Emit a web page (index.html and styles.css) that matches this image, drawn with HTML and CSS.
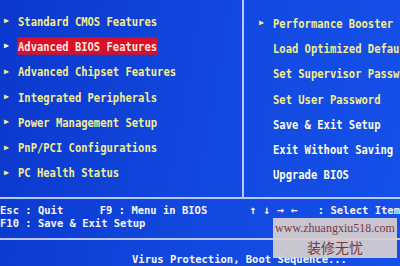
FILE: index.html
```html
<!DOCTYPE html>
<html lang="en">
<head>
  <meta charset="UTF-8">
  <title>CMOS Setup Utility</title>
  <link rel="stylesheet" href="styles.css">
</head>
<body>
  <div class="screen">
    <div class="menus">
      <ul class="menu menu-left">
        <li><span class="arrow">&#9654;</span><span class="label">Standard CMOS Features</span></li>
        <li class="active"><span class="arrow">&#9654;</span><span class="label">Advanced BIOS Features</span></li>
        <li><span class="arrow">&#9654;</span><span class="label">Advanced Chipset Features</span></li>
        <li><span class="arrow">&#9654;</span><span class="label">Integrated Peripherals</span></li>
        <li><span class="arrow">&#9654;</span><span class="label">Power Management Setup</span></li>
        <li><span class="arrow">&#9654;</span><span class="label">PnP/PCI Configurations</span></li>
        <li><span class="arrow">&#9654;</span><span class="label">PC Health Status</span></li>
      </ul>
      <ul class="menu menu-right">
        <li><span class="arrow">&#9654;</span><span class="label">Performance Booster Zone</span></li>
        <li><span class="arrow"></span><span class="label">Load Optimized Defaults</span></li>
        <li><span class="arrow"></span><span class="label">Set Supervisor Password</span></li>
        <li><span class="arrow"></span><span class="label">Set User Password</span></li>
        <li class="white"><span class="arrow"></span><span class="label">Save &amp; Exit Setup</span></li>
        <li class="white"><span class="arrow"></span><span class="label">Exit Without Saving</span></li>
        <li class="white"><span class="arrow"></span><span class="label">Upgrade BIOS</span></li>
      </ul>
    </div>

    <div class="keys">
      <div class="key-row">
        <span class="k1">Esc : Quit</span>
        <span class="k2">F9 : Menu in BIOS</span>
        <span class="k3">&#8593; &#8595; &#8594; &#8592;</span>
        <span>: Select Item</span>
      </div>
      <div class="key-row">
        <span>F10 : Save &amp; Exit Setup</span>
      </div>
    </div>

    <div class="help">Virus Protection, Boot Sequence...</div>

    <div class="watermark">
      <div class="wm-url">www.zhuangxiu518.com</div>
      <div class="wm-cn">装修无忧</div>
    </div>
  </div>
</body>
</html>
```

FILE: styles.css
```css
html, body {
  margin: 0;
  padding: 0;
}

body {
  width: 400px;
  height: 266px;
  overflow: hidden;
  background: linear-gradient(100deg, #0b38cc 0%, #1249e0 55%, #1550ea 100%);
  font-family: "DejaVu Sans Mono", "Liberation Mono", monospace;
  font-weight: bold;
  font-size: 10.5px;
  color: #f4ec94;
}

.screen {
  position: relative;
  height: 266px;
}

.menus {
  display: flex;
  height: 197px;
  border-bottom: 2px solid #b8c8f8;
}

.menu {
  list-style: none;
  margin: 0;
  padding: 8px 0 0 0;
}

.menu-left {
  flex: 0 0 auto;
  width: 238px;
  border-right: 2px solid #b8c8f8;
  padding-left: 4px;
}

.menu-right {
  flex: 1 1 auto;
  min-width: 0;
  overflow: hidden;
  padding-top: 10px;
  padding-left: 15px;
  white-space: nowrap;
}

.menu li {
  display: flex;
  align-items: center;
  height: 25.3px;
}

.arrow {
  flex: 0 0 13px;
  font-size: 8px;
  color: #f4ee90;
}

.label {
  display: inline-block;
  padding: 0 1px;
  line-height: 14px;
  transform: scaleY(1.25);
}

.menu li.active .label {
  background: #d8102a;
  color: #fbe8e0;
}

.menu li.active .arrow {
  color: #ffffff;
}

.menu li.white {
  color: #fbfbe8;
}

.keys {
  height: 34px;
  padding-top: 5px;
  border-bottom: 2px solid #b8c8f8;
  color: #f4f4f4;
  white-space: nowrap;
}

.key-row {
  display: flex;
  height: 13px;
  line-height: 13px;
}

.k1 {
  width: 16ch;
}

.k2 {
  width: 24ch;
}

.k3 {
  width: 10ch;
  font-size: 11.5px;
}

.help {
  padding: 13px 0 0 132px;
  color: #f4f4f4;
  white-space: nowrap;
}

.watermark {
  position: absolute;
  left: 273px;
  top: 218px;
  width: 124px;
  height: 40px;
  background: rgba(214, 208, 208, 0.93);
  font-family: "Liberation Serif", "Noto Sans CJK SC", serif;
  font-weight: normal;
  color: #7d3636;
  text-align: center;
}

.wm-url {
  font-size: 12px;
  line-height: 19px;
  padding-top: 1px;
  white-space: nowrap;
}

.wm-cn {
  font-family: "Noto Sans CJK SC", sans-serif;
  font-size: 14px;
  line-height: 18px;
}
```
